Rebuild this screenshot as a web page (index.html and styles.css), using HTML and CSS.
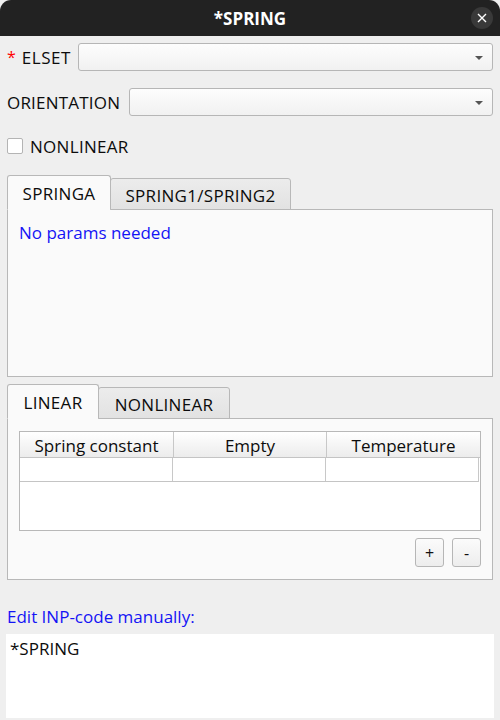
FILE: index.html
```html
<!DOCTYPE html>
<html>
<head>
<meta charset="utf-8">
<link rel="stylesheet" href="styles.css">
</head>
<body>
<div class="window">
  <div class="titlebar">
    <span class="title">*SPRING</span>
    <span class="close"><svg width="10" height="10" viewBox="0 0 10 10"><path d="M1 1L9 9M9 1L1 9" stroke="#fff" stroke-width="1.4" fill="none"/></svg></span>
  </div>
  <div class="content">
    <div class="field f-elset">
      <span class="req">*</span>
      <span class="label">ELSET</span>
      <div class="combo"><span class="arrow"></span></div>
    </div>
    <div class="field f-orient">
      <span class="label">ORIENTATION</span>
      <div class="combo"><span class="arrow"></span></div>
    </div>
    <div class="check-row">
      <span class="checkbox"></span>
      <span class="label">NONLINEAR</span>
    </div>

    <div class="tabs tabs-1">
      <div class="tabbar">
        <div class="tab active t-springa">SPRINGA</div>
        <div class="tab t-spring12">SPRING1/SPRING2</div>
      </div>
      <div class="pane pane-1">
        <div class="info">No params needed</div>
      </div>
    </div>

    <div class="tabs tabs-2">
      <div class="tabbar">
        <div class="tab active t-linear">LINEAR</div>
        <div class="tab t-nonlinear">NONLINEAR</div>
      </div>
      <div class="pane pane-2">
        <div class="table">
          <div class="thead">
            <div class="th c1">Spring constant</div>
            <div class="th c2">Empty</div>
            <div class="th c3">Temperature</div>
          </div>
          <div class="trow">
            <div class="td c1"></div>
            <div class="td c2"></div>
            <div class="td c3"></div>
          </div>
        </div>
        <div class="buttons">
          <button class="btn">+</button>
          <button class="btn">-</button>
        </div>
      </div>
    </div>

    <div class="edit-label">Edit INP-code manually:</div>
    <div class="code">*SPRING</div>
  </div>
</div>
</body>
</html>
```
FILE: styles.css
```css
* { box-sizing: border-box; }
html, body { margin: 0; padding: 0; background: #efefef; }
body {
  font-family: "Open Sans", "Noto Sans", sans-serif;
  font-size: 17px;
  color: #0c0c0c;
}
.window {
  width: 500px;
  height: 720px;
  background: #efefef;
  display: flex;
  flex-direction: column;
  overflow: hidden;
}
.titlebar {
  height: 36px;
  background: #222222;
  border-radius: 11px 11px 0 0;
  display: flex;
  align-items: center;
  justify-content: center;
  position: relative;
}
.title {
  color: #fff;
  font-weight: bold;
  font-size: 17px;
}
.close {
  position: absolute;
  right: 7px;
  top: 7px;
  width: 22px;
  height: 22px;
  border-radius: 50%;
  background: #393939;
  display: flex;
  align-items: center;
  justify-content: center;
}
.content {
  padding: 7px 7px 0 7px;
  display: flex;
  flex-direction: column;
  flex: 1;
}
.field {
  display: flex;
  align-items: center;
  height: 28px;
}
.req { color: #ff0000; margin-right: 6px; font-size: 16px; }
.f-elset .label { margin-right: 7px; letter-spacing: 0.5px; }
.f-orient { margin-top: 17px; }
.f-orient .label { margin-right: 9px; letter-spacing: 0.2px; }
.combo {
  flex: 1;
  height: 28px;
  border: 1px solid #b6b6b6;
  border-radius: 3px;
  background: linear-gradient(#fdfdfd, #f1f1f1);
  position: relative;
}
.arrow {
  position: absolute;
  right: 9px;
  top: 12px;
  width: 0;
  height: 0;
  border-left: 4px solid transparent;
  border-right: 4px solid transparent;
  border-top: 4px solid #555;
}
.check-row {
  display: flex;
  align-items: center;
  margin-top: 22px;
  height: 16px;
}
.checkbox {
  width: 16px;
  height: 16px;
  border: 1px solid #b4b4b4;
  border-radius: 2px;
  background: #fff;
  margin-right: 7px;
}
.check-row .label { letter-spacing: 0.3px; }
.tabs-1 { margin-top: 21px; }
.tabs-2 { margin-top: 7px; }
.tabbar {
  display: flex;
  align-items: flex-end;
  height: 35px;
  position: relative;
  z-index: 1;
  margin-bottom: -1px;
}
.tab {
  height: 32px;
  padding-top: 3px;
  border: 1px solid #b8b8b8;
  border-radius: 3px 3px 0 0;
  background: linear-gradient(#ececec, #e2e2e2);
  display: flex;
  align-items: center;
  justify-content: center;
  margin-left: -1px;
  letter-spacing: 0.3px;
}
.tab.active {
  height: 35px;
  padding-top: 2px;
  background: #fafafa;
  border-bottom-color: #fafafa;
  margin-left: 0;
}
.t-springa { width: 104px; }
.t-spring12 { width: 181px; }
.t-linear { width: 92px; }
.t-nonlinear { width: 132px; }
.pane {
  border: 1px solid #b8b8b8;
  background: #fafafa;
}
.pane-1 { height: 168px; padding: 11px 11px; }
.info { color: #1414f5; }
.pane-2 { height: 162px; padding: 12px 11px 11px 11px; }
.table {
  height: 100px;
  border: 1px solid #b8b8b8;
  background: #fff;
}
.thead {
  display: flex;
  height: 26px;
  border-bottom: 1px solid #c4c4c4;
  background: linear-gradient(#ffffff, #ececec);
}
.th {
  display: flex;
  align-items: center;
  justify-content: center;
  padding-top: 1px;
  border-right: 1px solid #c8c8c8;
}
.th.c3 { border-right: none; }
.c1 { width: 154px; }
.c2 { width: 153px; }
.c3 { width: 153px; }
.trow {
  display: flex;
  height: 24px;
  border-bottom: 1px solid #c4c4c4;
  width: 459px;
  border-right: 1px solid #c8c8c8;
}
.td { border-right: 1px solid #c8c8c8; }
.td.c3 { border-right: none; }
.buttons {
  display: flex;
  justify-content: flex-end;
  gap: 8px;
  margin-top: 7px;
}
.btn {
  width: 29px;
  height: 29px;
  padding: 0;
  border: 1px solid #b6b6b6;
  border-radius: 3px;
  background: linear-gradient(#fbfbfb, #ededed);
  font-family: "Open Sans", "Noto Sans", sans-serif;
  font-size: 16px;
  color: #111;
  display: flex;
  align-items: center;
  justify-content: center;
}
.edit-label {
  color: #1414f5;
  margin-top: 26px;
  height: 22px;
  line-height: 22px;
}
.code {
  margin-top: 6px;
  margin-left: -1px;
  margin-right: -1px;
  height: 84px;
  background: #fff;
  padding: 3px 4px;
}
```
